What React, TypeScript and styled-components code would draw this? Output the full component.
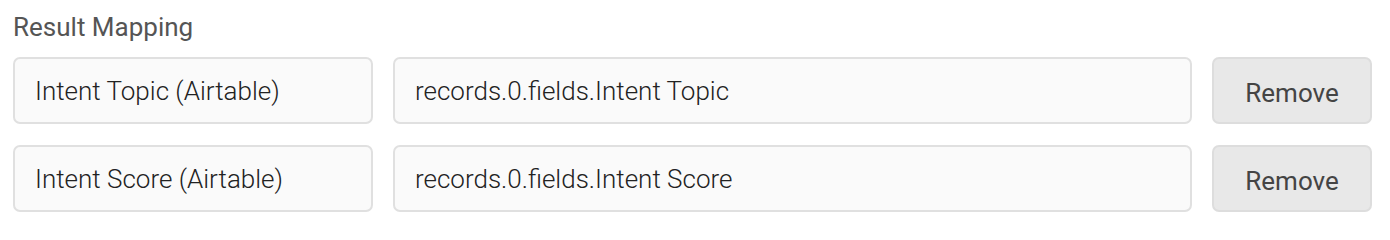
import React from 'react'
import { createGlobalStyle, styled } from 'styled-components'

const GlobalStyle = createGlobalStyle`
    body {
        margin: 0;
        background: #ffffff;
        font-family: Roboto, "Liberation Sans", sans-serif;
    }
`

type Mapping = { target: string; path: string }

const mappings: Mapping[] = [
    { target: 'Intent Topic (Airtable)', path: 'records.0.fields.Intent Topic' },
    { target: 'Intent Score (Airtable)', path: 'records.0.fields.Intent Score' },
]

const App: React.FC = () => {
    return (
        <>
            <GlobalStyle />
            <Section>
                <Title>Result Mapping</Title>
                {mappings.map(m => (
                    <Row key={m.target}>
                        <Field $width="360px" readOnly value={m.target} />
                        <Field $width="799px" readOnly value={m.path} />
                        <RemoveButton type="button">Remove</RemoveButton>
                    </Row>
                ))}
            </Section>
        </>
    )
}

const Section = styled.section`
    display: flex;
    flex-direction: column;
    gap: 21px;
    padding: 14px 13px 0 13px;
`

const Title = styled.div`
    font-size: 26px;
    line-height: 26px;
    color: #555555;
    margin-bottom: -4px;
`

const Row = styled.div`
    display: flex;
    align-items: center;
    gap: 20px;
`

const Field = styled.input<{ $width: string }>`
    box-sizing: border-box;
    width: ${p => p.$width};
    height: 67px;
    padding: 0 20px;
    background: #fafafa;
    border: 2px solid #e0e0e0;
    border-radius: 7px;
    font-family: Roboto, "Liberation Sans", sans-serif;
    font-size: 26px;
    font-weight: 300;
    color: #222222;
    outline: none;
`

const RemoveButton = styled.button`
    box-sizing: border-box;
    width: 160px;
    height: 67px;
    padding: 4px 0 0 0;
    background: #e8e8e8;
    border: 2px solid #dddddd;
    border-radius: 7px;
    font-family: Roboto, "Liberation Sans", sans-serif;
    font-size: 26px;
    color: #444444;
    cursor: pointer;
`

export default App
